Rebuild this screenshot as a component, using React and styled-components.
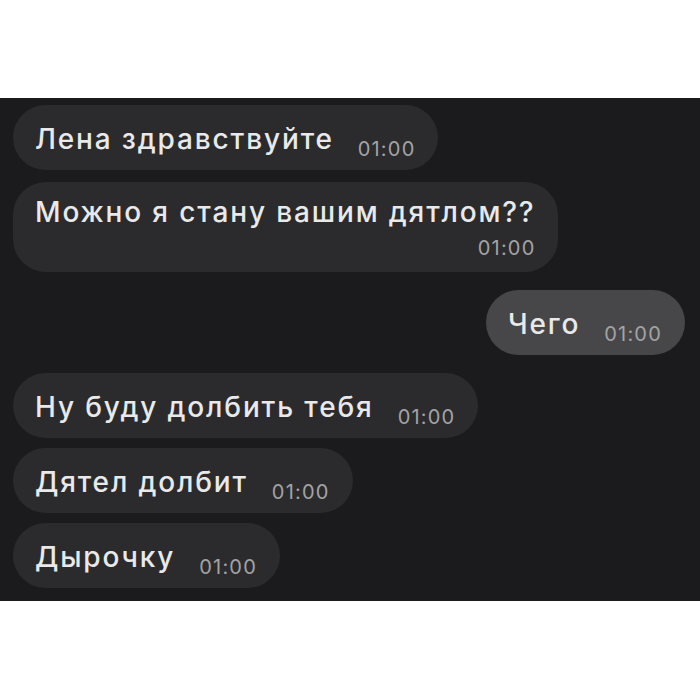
import React from 'react';
import styled, { createGlobalStyle } from 'styled-components';

const GlobalStyle = createGlobalStyle`
  html, body {
    margin: 0;
    padding: 0;
    background: #ffffff;
  }
  body {
    font-family: Inter, "Noto Sans", "Liberation Sans", sans-serif;
  }
`;

const Page = styled.div`
  width: 700px;
  height: 700px;
  padding-top: 98px;
  box-sizing: border-box;
`;

const Chat = styled.div`
  height: 503px;
  background: #1b1b1d;
  box-sizing: border-box;
  padding: 7px 15px 0 13px;
  display: flex;
  flex-direction: column;
  overflow: hidden;
`;

const Row = styled.div`
  display: flex;
  justify-content: ${(p) => (p.$out ? 'flex-end' : 'flex-start')};
  margin-top: ${(p) => p.$top}px;
`;

const Bubble = styled.div`
  display: flex;
  flex-direction: ${(p) => (p.$stacked ? 'column' : 'row')};
  align-items: flex-end;
  gap: ${(p) => (p.$stacked ? '10px' : '24px')};
  padding: ${(p) => (p.$stacked ? '14px 23px 14px 22px' : '18px 23px 15px 22px')};
  border-radius: 33px;
  background: ${(p) => (p.$out ? '#474749' : '#2b2b2d')};
`;

const Text = styled.span`
  align-self: flex-start;
  font-size: 28px;
  line-height: 32px;
  font-weight: 500;
  letter-spacing: 1.85px;
  color: #e9e9ea;
  white-space: nowrap;
`;

const Time = styled.span`
  font-size: 20px;
  line-height: 20px;
  letter-spacing: 1.2px;
  color: #a3a3a5;
  margin-bottom: ${(p) => (p.$stacked ? '0' : '-4px')};
`;

const messages = [
  { text: 'Лена здравствуйте', time: '01:00', top: 0 },
  { text: 'Можно я стану вашим дятлом??', time: '01:00', stacked: true, top: 12 },
  { text: 'Чего', time: '01:00', out: true, top: 18 },
  { text: 'Ну буду долбить тебя', time: '01:00', top: 18 },
  { text: 'Дятел долбит', time: '01:00', top: 10 },
  { text: 'Дырочку', time: '01:00', top: 10 },
];

const App = () => {
  return (
    <Page>
      <GlobalStyle />
      <Chat>
        {messages.map((m, i) => (
          <Row key={i} $out={m.out} $top={m.top}>
            <Bubble $out={m.out} $stacked={m.stacked}>
              <Text>{m.text}</Text>
              <Time $stacked={m.stacked}>{m.time}</Time>
            </Bubble>
          </Row>
        ))}
      </Chat>
    </Page>
  );
};

export default App;
